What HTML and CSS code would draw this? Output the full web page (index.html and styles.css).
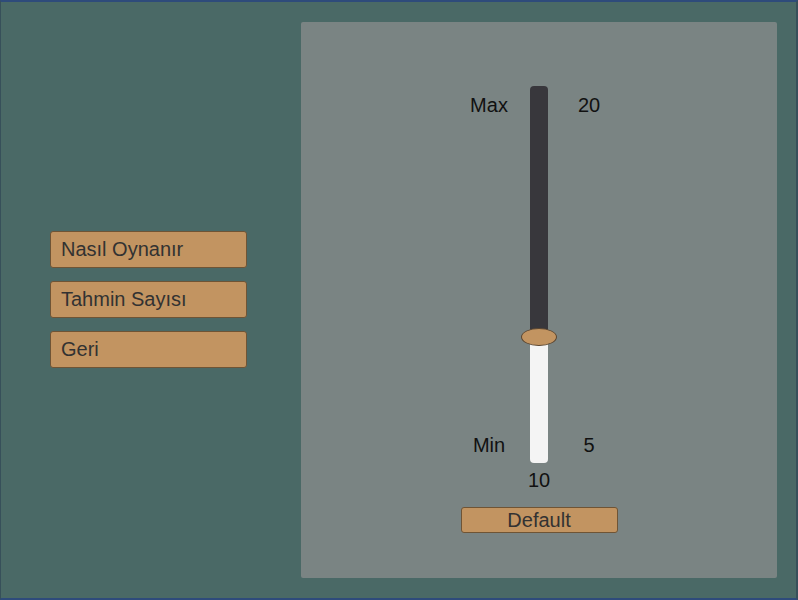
FILE: index.html
```html
<!DOCTYPE html>
<html>
<head>
<meta charset="utf-8">
<link rel="stylesheet" href="styles.css">
</head>
<body>
<div class="frame">
  <div class="menu">
    <div class="btn">Nasıl Oynanır</div>
    <div class="btn">Tahmin Sayısı</div>
    <div class="btn">Geri</div>
  </div>
  <div class="panel">
    <div class="slider-row">
      <div class="labels">
        <span>Max</span>
        <span>Min</span>
      </div>
      <div class="track">
        <div class="handle"></div>
      </div>
      <div class="labels">
        <span>20</span>
        <span>5</span>
      </div>
    </div>
    <div class="value">10</div>
    <div class="default-btn">Default</div>
  </div>
</div>
</body>
</html>
```
FILE: styles.css
```css
html, body {
  margin: 0;
  padding: 0;
  background: #4a6966;
}
.frame {
  width: 798px;
  height: 600px;
  box-sizing: border-box;
  border-top: 2px solid #2e4b7b;
  border-bottom: 2px solid #2e4b7b;
  border-left: 1px solid #37505a;
  border-right: 2px solid #37505a;
  background: #4a6966;
  display: flex;
  font-family: "Liberation Sans", Arial, sans-serif;
}
.menu {
  width: 300px;
  display: flex;
  flex-direction: column;
  gap: 13px;
  padding-top: 229px;
  padding-left: 49px;
  box-sizing: border-box;
}
.btn {
  width: 197px;
  height: 37px;
  box-sizing: border-box;
  background: #c29461;
  border: 1px solid #6f5435;
  border-radius: 3px;
  color: #323232;
  font-size: 20px;
  line-height: 35px;
  padding-left: 10px;
}
.panel {
  margin-top: 20px;
  width: 476px;
  height: 556px;
  background: #7a8483;
  border-radius: 2px;
  display: flex;
  flex-direction: column;
  align-items: center;
  padding-top: 64px;
  box-sizing: border-box;
}
.slider-row {
  display: grid;
  grid-template-columns: 82px 18px 82px;
  height: 377px;
}
.labels {
  display: flex;
  flex-direction: column;
  justify-content: space-between;
  align-items: center;
  padding: 8px 0 7px;
  font-size: 20px;
  line-height: 22px;
  color: #111;
}
.track {
  position: relative;
  width: 18px;
  height: 377px;
  border-radius: 4px;
  background: linear-gradient(to bottom, #38373c 0, #38373c 251px, #f4f4f4 251px, #f4f4f4 100%);
}
.handle {
  position: absolute;
  left: -9px;
  top: 242px;
  width: 36px;
  height: 18px;
  box-sizing: border-box;
  border-radius: 50%;
  background: #c29461;
  border: 1px solid #5a4530;
}
.value {
  margin-top: 6px;
  font-size: 20px;
  line-height: 22px;
  color: #111;
}
.default-btn {
  margin-top: 16px;
  width: 157px;
  height: 26px;
  box-sizing: border-box;
  background: #c29461;
  border: 1px solid #6f5435;
  border-radius: 3px;
  color: #323232;
  font-size: 20px;
  line-height: 24px;
  text-align: center;
}
```
